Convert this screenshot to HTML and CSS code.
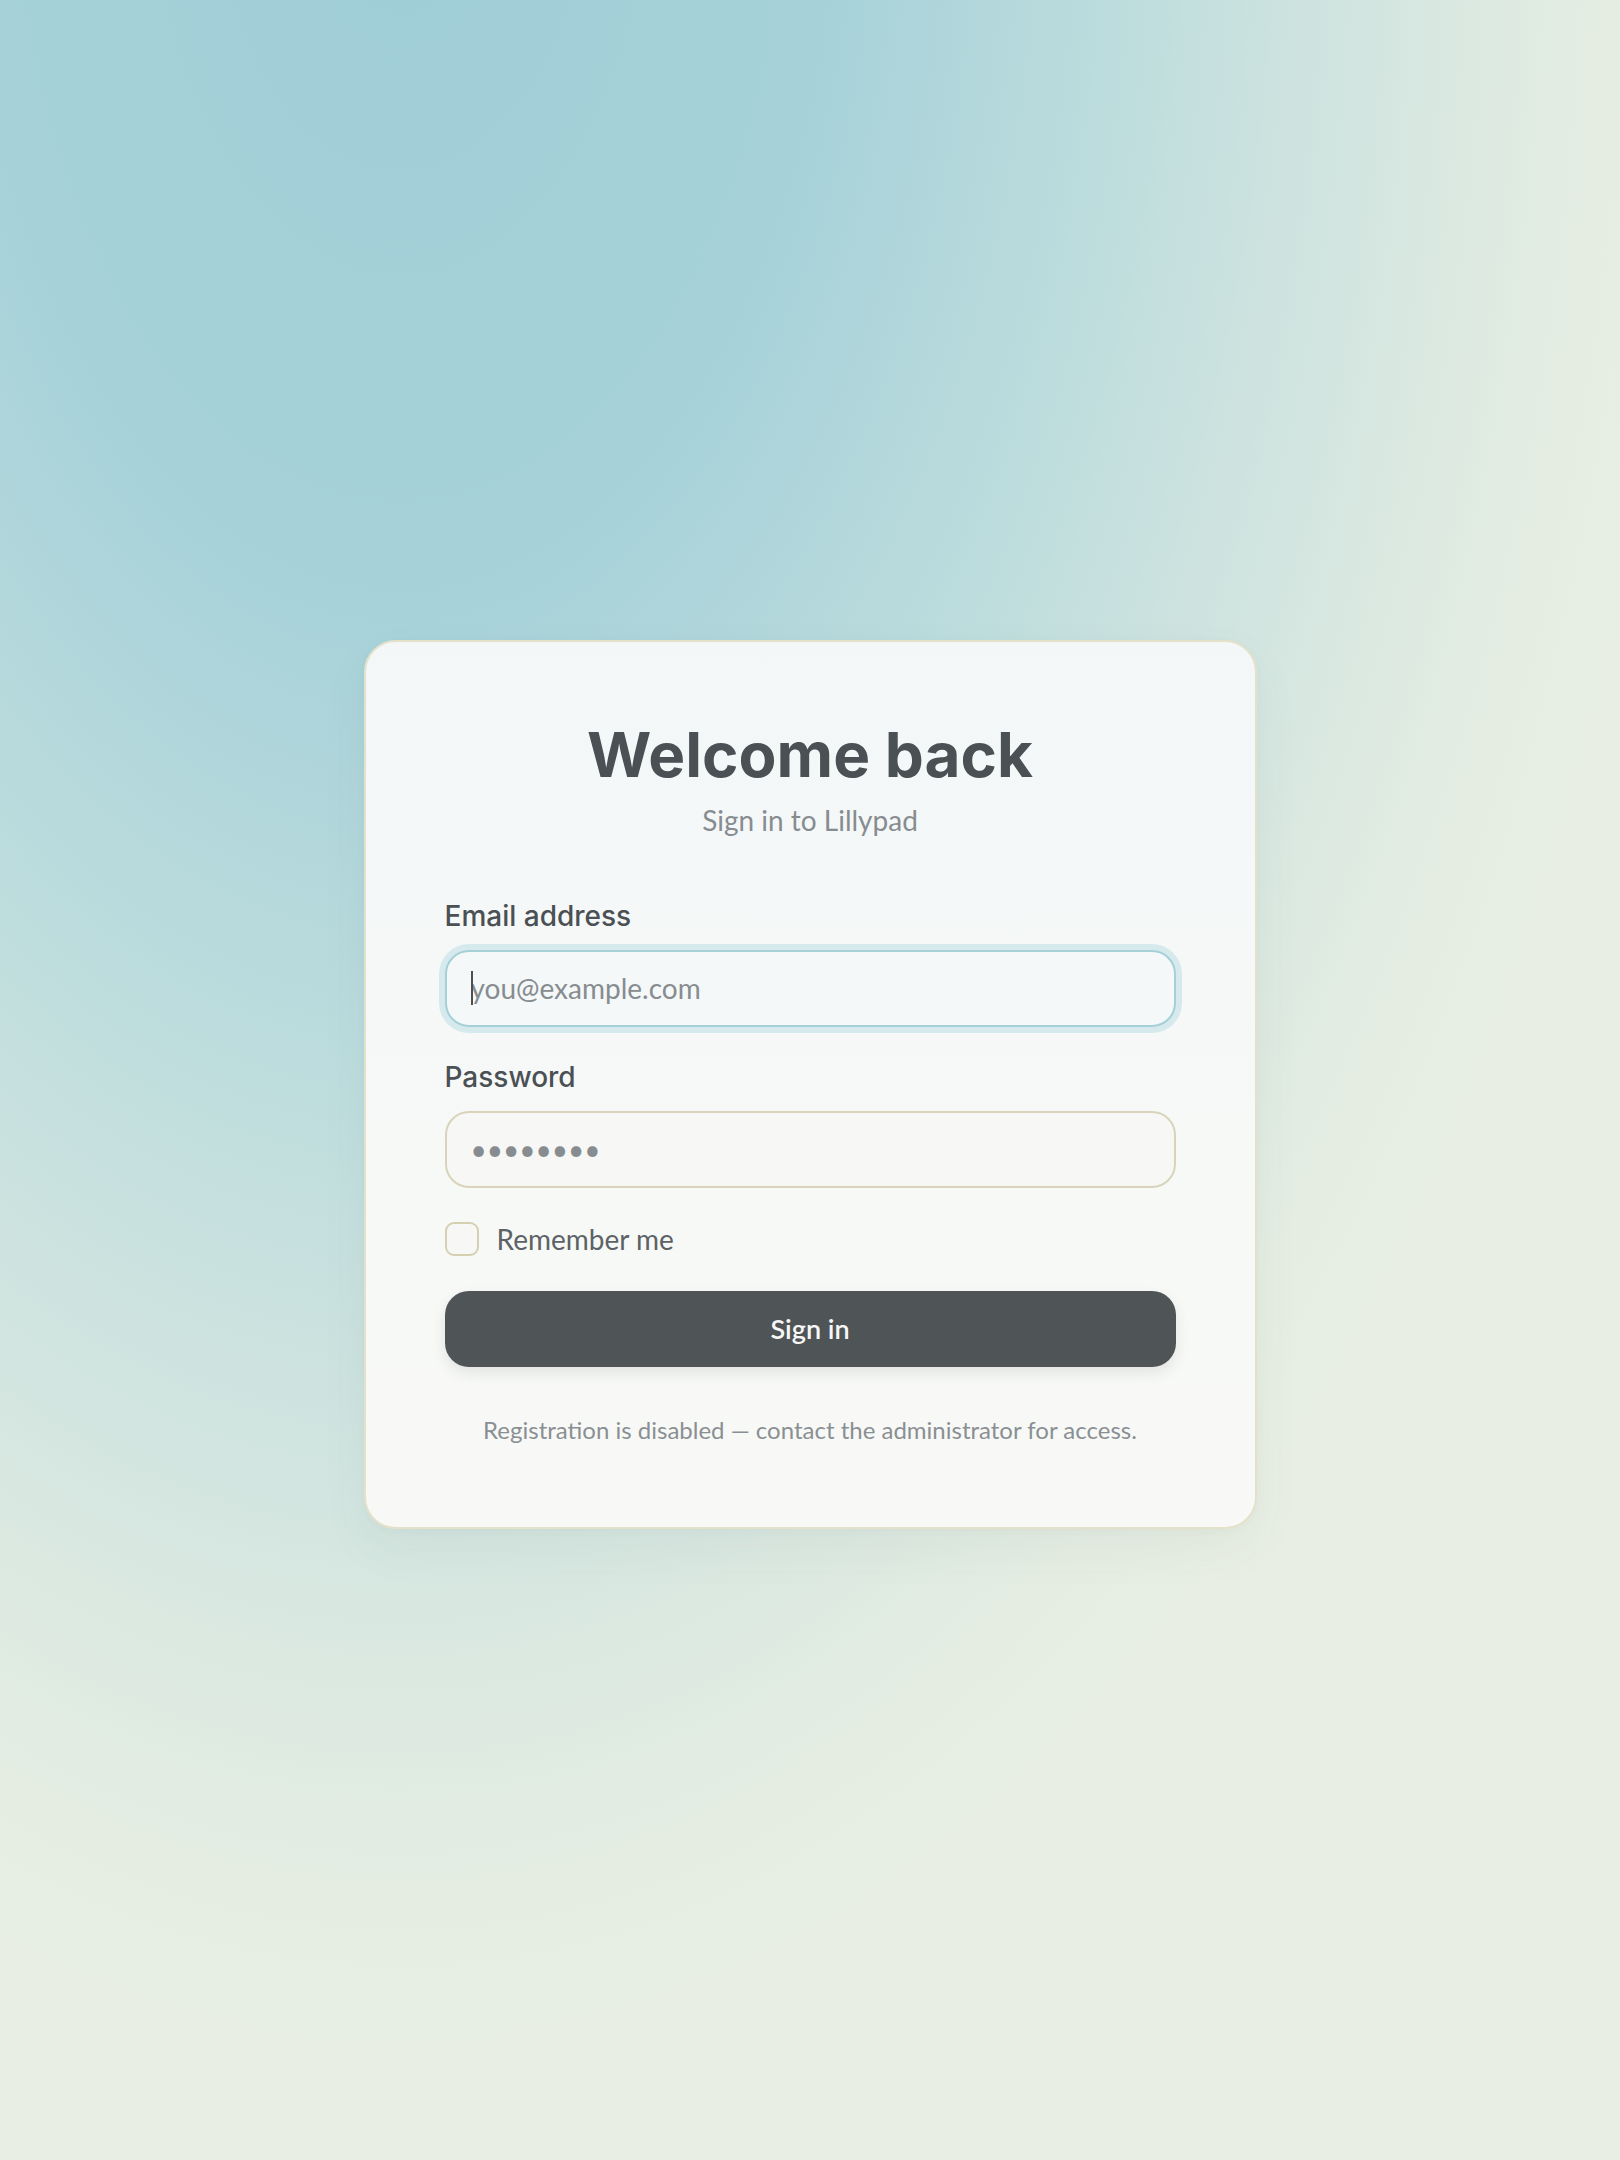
FILE: index.html
```html
<!DOCTYPE html>
<html lang="en">
<head>
<meta charset="utf-8">
<title>Sign in – Lillypad</title>
<link rel="stylesheet" href="styles.css">
</head>
<body>
<main class="page">
  <section class="card">
    <header class="card-head">
      <h1 class="title">Welcome back</h1>
      <p class="subtitle">Sign in to Lillypad</p>
    </header>
    <form class="form">
      <div class="field">
        <label class="label" for="email">Email address</label>
        <div class="input-wrap">
          <input class="input is-focused" id="email" type="email" placeholder="you@example.com">
          <span class="caret"></span>
        </div>
      </div>
      <div class="field">
        <label class="label" for="password">Password</label>
        <input class="input" id="password" type="password" placeholder="••••••••">
      </div>
      <label class="remember">
        <span class="checkbox"></span>
        <span class="remember-text">Remember me</span>
      </label>
      <button class="button" type="button">Sign in</button>
    </form>
    <p class="note">Registration is disabled — contact the administrator for access.</p>
  </section>
</main>
</body>
</html>
```
FILE: styles.css
```css
* { box-sizing: border-box; }
html, body { margin: 0; padding: 0; }
body {
  min-height: 2160px;
  font-family: "Lato", "Noto Sans", sans-serif;
  background-color: #e7ede3;
  background-image:
    radial-gradient(ellipse 1300px 2200px at 400px -150px, #9fcdd6 0%, #a6d1d9 33%, #bcdcdd 55%, #d3e5e0 75%, #e4ede2 92%, #e8eee3 100%);
}
.page {
  min-height: 2160px;
  padding-top: 8px;
  display: flex;
  align-items: center;
  justify-content: center;
}
.card {
  width: 893px;
  padding: 77px 79px 79px;
  border: 2px solid #e4e1cb;
  border-radius: 32px;
  background: linear-gradient(180deg, #f3f7f8 0%, #f7f9f7 60%, #f8f9f6 100%);
  box-shadow: 0 20px 50px rgba(70, 100, 100, 0.05), 0 2px 8px rgba(70, 100, 100, 0.03);
}
.card-head { text-align: center; }
.title {
  margin: 0;
  font-family: "Inter", "Noto Sans", sans-serif;
  font-weight: 700;
  font-size: 62px;
  line-height: 72px;
  letter-spacing: 0;
  color: #4a5054;
}
.subtitle {
  margin: 9px 0 0;
  font-size: 28px;
  line-height: 40px;
  color: #878c90;
}
.form {
  margin-top: 56px;
  display: flex;
  flex-direction: column;
}
.field {
  display: flex;
  flex-direction: column;
  gap: 14px;
  margin-bottom: 30px;
}
.label {
  font-family: "Inter", "Noto Sans", sans-serif;
  font-weight: 500;
  font-size: 28px;
  line-height: 40px;
  color: #4a5054;
}
.input-wrap { position: relative; }
.input {
  width: 100%;
  height: 77px;
  padding: 0 24px;
  border: 2px solid #d8d4bb;
  border-radius: 24px;
  background: #f7f8f5;
  font-family: "Lato", "Noto Sans", sans-serif;
  font-size: 28px;
  color: #4a5054;
  outline: none;
}
.input::placeholder { color: #878c90; opacity: 1; }
.input.is-focused {
  border-color: #a6d0d7;
  background: #f4f8f8;
  box-shadow: 0 0 0 6px #d6eaed;
}
.caret {
  position: absolute;
  left: 26px;
  top: 21px;
  width: 2px;
  height: 34px;
  background: #4a5054;
}
.remember {
  display: flex;
  align-items: center;
  gap: 18px;
  height: 42px;
}
.checkbox {
  width: 34px;
  height: 34px;
  border: 2px solid #d6d0b2;
  border-radius: 9px;
  background: #f7f8f5;
}
.remember-text {
  font-size: 28px;
  line-height: 42px;
  color: #5c6266;
}
.button {
  margin-top: 31px;
  height: 76px;
  border: 0;
  border-radius: 24px;
  background: #4f5457;
  color: #f6f7f6;
  font-family: "Lato", "Noto Sans", sans-serif;
  font-weight: 600;
  font-size: 27px;
  box-shadow: 0 6px 14px rgba(40, 50, 50, 0.10);
}
.note {
  margin: 45px 0 0;
  text-align: center;
  font-size: 24px;
  line-height: 36px;
  color: #8a8f93;
}
```
